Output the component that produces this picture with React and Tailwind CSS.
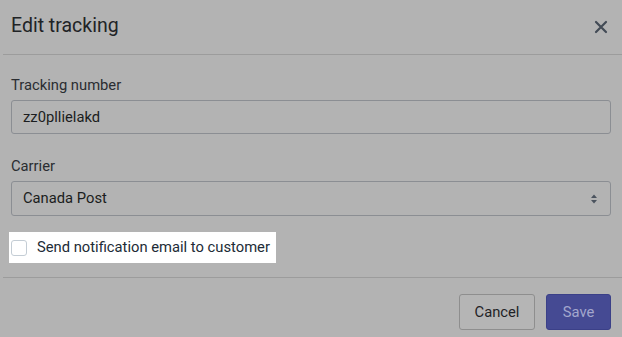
export default function App() {
  return (
    <div
      className="w-[622px] h-[337px] bg-[#b3b3b3] overflow-hidden text-[#212326]"
      style={{ fontFamily: '"Roboto", "Liberation Sans", sans-serif' }}
    >
      <div className="ml-[3px] h-[55px] flex items-center justify-between pl-[8px] pr-[14px] border-b border-[#9c9c9c]">
        <h1 className="text-[19.5px] leading-none pb-[3px]">Edit tracking</h1>
        <button className="text-[#434b56]">
          <svg width="14" height="14" viewBox="0 0 14 14" fill="none" stroke="currentColor" strokeWidth="2.2" strokeLinecap="round">
            <path d="M2 2l10 10M12 2L2 12" />
          </svg>
        </button>
      </div>

      <div className="pl-[11px] pr-[11px] pt-[20px] flex flex-col">
        <label className="text-[14.75px] leading-[20px] text-[#2a2d31]">Tracking number</label>
        <div className="mt-[5px] h-[34px] border border-[#8b8e93] rounded-[3px] flex items-center px-[11px] text-[14.75px] text-[#1b1d20]">
          zz0pllielakd
        </div>

        <label className="mt-[22px] text-[14.75px] leading-[20px] text-[#2a2d31]">Carrier</label>
        <div className="mt-[5px] h-[35px] border border-[#8b8e93] rounded-[3px] flex items-center justify-between pl-[11px] pr-[11px] text-[14.75px] text-[#1b1d20]">
          <span>Canada Post</span>
          <svg width="10" height="12" viewBox="0 0 10 12" fill="#4b535e">
            <path d="M5 1.5L8 5H2z" />
            <path d="M5 10.5L8 7H2z" />
          </svg>
        </div>
      </div>

      <div className="ml-[9px] mt-[16px] w-[267px] h-[31px] bg-white flex items-center pl-[2px]">
        <span className="w-[16px] h-[16px] rounded-[3px] border border-[#c4cdd5] bg-white" />
        <span className="ml-[10px] text-[14.75px] text-[#212b36]">Send notification email to customer</span>
      </div>

      <div className="ml-[3px] mt-[14px] border-t border-[#9c9c9c] flex justify-end gap-[11px] pr-[11px] pt-[16px]">
        <button className="w-[76px] h-[36px] rounded-[3px] border border-[#8e8e8e] bg-[#b5b5b5] text-[14.75px] text-[#1f2226]">
          Cancel
        </button>
        <button className="w-[65px] h-[36px] rounded-[3px] border border-[#3b4088] bg-[#454a93] text-[14.75px] text-[#a3a7cd]">
          Save
        </button>
      </div>
    </div>
  );
}
